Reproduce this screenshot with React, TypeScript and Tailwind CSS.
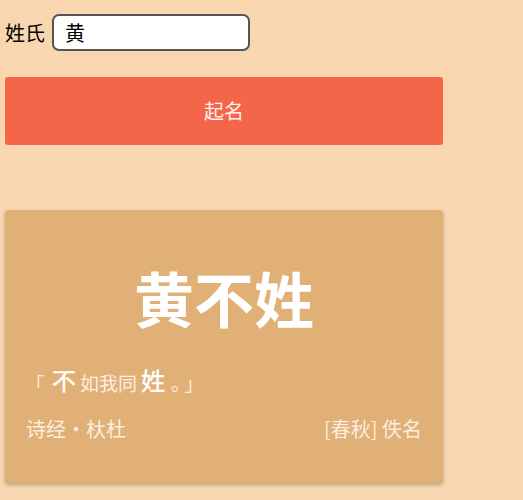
import React from 'react';

const font = { fontFamily: '"Noto Sans CJK SC", "Noto Sans", sans-serif' };

const App: React.FC = () => {
  return (
    <div className="w-full min-h-[500px] bg-[#f8d6b0] px-[5px] pt-[14px]" style={font}>
      <div className="flex items-center gap-[7px]">
        <label className="text-[20px] leading-none text-black">姓氏</label>
        <input
          defaultValue="黄"
          className="w-[198px] h-[37px] rounded-[7px] border-2 border-[#555] bg-white px-[11px] text-[20px] text-black outline-none"
        />
      </div>

      <button className="mt-[26px] w-[438px] h-[68px] rounded-[3px] bg-[#f4664a] text-[20px] text-[#fdf1e6]">
        起名
      </button>

      {/* Result card */}
      <div className="mt-[65px] w-[438px] h-[273px] rounded-[3px] bg-[#e0b076] shadow-[0_2px_4px_rgba(0,0,0,0.25)] px-[21px] pt-[48px]">
        <h1 className="text-center text-[60px] leading-[78px] font-bold text-white">黄不姓</h1>
        <p className="mt-[32px] flex items-end gap-[4px] text-[#fcefe0] leading-none">
          <span className="text-[18px] mr-[4px]">「</span>
          <span className="text-[24px] text-white [-webkit-text-stroke:0.4px_white]">不</span>
          <span className="text-[19px]">如我同</span>
          <span className="text-[24px] text-white [-webkit-text-stroke:0.4px_white]">姓</span>
          <span className="text-[19px] ml-[2px] tracking-[4px]">。」</span>
        </p>
        <div className="mt-[22px] flex justify-between text-[20px] text-[#fbeede]">
          <span>诗经·杕杜</span>
          <span>[春秋] 佚名</span>
        </div>
      </div>
    </div>
  );
};

export default App;
